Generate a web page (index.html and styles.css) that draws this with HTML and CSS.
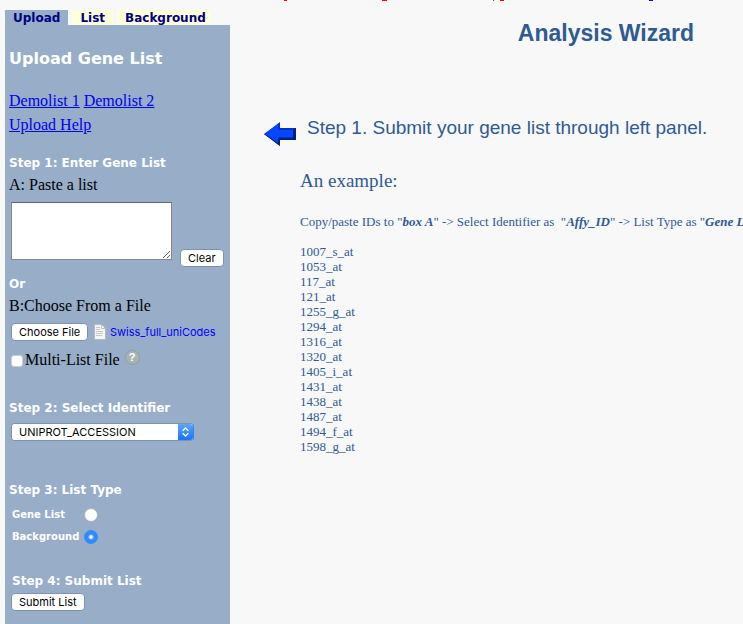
FILE: index.html
```html
<!DOCTYPE html>
<html lang="en">
<head>
<meta charset="utf-8">
<title>Analysis Wizard</title>
<link rel="stylesheet" href="styles.css">
</head>
<body>
<div class="page">
  <aside class="side">
    <nav class="tabs">
      <a class="tab active" href="#upload">Upload</a>
      <a class="tab" href="#list">List</a>
      <a class="tab" href="#background">Background</a>
    </nav>
    <form class="panel" id="upload">
      <h2 class="title">Upload Gene List</h2>
      <p class="links"><a href="#demo1">Demolist 1</a> <a href="#demo2">Demolist 2</a><br><a href="#help">Upload Help</a></p>

      <h3 class="step">Step 1: Enter Gene List</h3>
      <label class="text" for="paste">A: Paste a list</label>
      <div class="paste-row">
        <textarea class="paste" id="paste"></textarea>
        <button class="btn" type="button">Clear</button>
      </div>
      <h3 class="step">Or</h3>
      <label class="text" for="file">B:Choose From a File</label>
      <div class="file-row">
        <input class="file" id="file" type="file">
        <svg class="doc" viewBox="0 0 12 16" aria-hidden="true">
          <path d="M.5.5h7l4 4v11H.5z" fill="#f4f4f4" stroke="#b5b9bd"/>
          <path d="M7.500.5v4h4z" fill="#fff" stroke="#aaa" stroke-width=".7"/>
          <path d="M2 3.500h4M2 5.500h4M2 7.500h7M2 9.500h7M2 11.500h6" stroke="#bcbcbc" stroke-width=".8"/>
        </svg>
        <span class="filename">Swiss_full_uniCodes</span>
      </div>
      <div class="multi-row">
        <input class="check" id="multi" type="checkbox">
        <label class="multi" for="multi">Multi-List File</label>
        <a class="help" href="#multi-help">?</a>
      </div>

      <h3 class="step">Step 2: <label for="identifier">Select Identifier</label></h3>
      <div class="select-row">
        <select class="select" id="identifier"><option>UNIPROT_ACCESSION</option></select>
        <svg class="chevrons" viewBox="0 0 15 18" aria-hidden="true">
          <path d="M5 7.500 7.500 5 10 7.500M5 10.500 7.500 13 10 10.500" fill="none" stroke="#fff" stroke-width="1.300" stroke-linecap="round" stroke-linejoin="round"/>
        </svg>
      </div>

      <h3 class="step">Step 3: List Type</h3>
      <div class="types">
        <label for="gene">Gene List</label><input class="radio" id="gene" type="radio" name="type">
        <label for="bg">Background</label><input class="radio" id="bg" type="radio" name="type" checked>
      </div>

      <h3 class="step last">Step 4: Submit List</h3>
      <button class="btn" type="button">Submit List</button>
    </form>
  </aside>

  <main class="main">
    <svg class="notice" viewBox="0 0 400 2" aria-hidden="true">
      <path d="M14 0h3v1h-3zM112 0h5v1h-5zM223 0h1v1h-1zM230 0h4v1h-4z" fill="#f00"/>
      <path d="M379 0h4v1h-4z" fill="#00f"/>
    </svg>
    <h1 class="heading">Analysis Wizard</h1>
    <div class="lead">
      <svg class="arrow" viewBox="0 0 32 24" aria-hidden="true">
        <path d="M0 12 16 0v6h16v12H16v6z" fill="#0034c4"/>
        <path d="M0 12 16 24v-6h16V6l-3 2v8H14v4L3 12z" fill="#002080"/>
        <path d="M1 12 14 2v6h15v7H14v6z" fill="#0646ff"/>
      </svg>
      <h2 class="lead-text">Step 1. Submit your gene list through left panel.</h2>
    </div>
    <section class="example">
      <h3 class="example-title">An example:</h3>
      <p class="hint">Copy/paste IDs to "<b><i>box A</i></b>" -&gt; Select Identifier as&nbsp; "<b><i>Affy_ID</i></b>" -&gt; List Type as "<b><i>Gene List</i></b>"</p>
      <ul class="ids">
        <li>1007_s_at</li><li>1053_at</li><li>117_at</li><li>121_at</li><li>1255_g_at</li><li>1294_at</li><li>1316_at</li>
        <li>1320_at</li><li>1405_i_at</li><li>1431_at</li><li>1438_at</li><li>1487_at</li><li>1494_f_at</li><li>1598_g_at</li>
      </ul>
    </section>
  </main>
</div>
</body>
</html>
```
FILE: styles.css
```css
* { box-sizing: border-box; }
body { margin: 0; background: #f8f8f8; font: 16px/20px "Liberation Serif", serif; color: #000; overflow: hidden; }
h1, h2, h3, p, ul { margin: 0; padding: 0; }
.page { display: flex; min-height: 100vh; }

.side { flex: 0 0 225px; margin-left: 5px; padding-top: 10px; display: flex; flex-direction: column; }
.tabs { display: flex; gap: 4px; }
.tab { padding: 0 8px; height: 15px; background: #ffffdb; color: #000080; font: bold 12px/16px "DejaVu Sans", sans-serif; text-decoration: none; }
.tab:last-child { padding-right: 4px; }
.tab.active { background: #97adc8; }
.panel { flex: 1; padding: 24px 4px 12px; background: #97adc8; }
.title { color: #fff; font: bold 16px/20px "DejaVu Sans", sans-serif; }
.links { margin: 20px 0 18px; line-height: 24px; }
.links a { color: #0000ee; }
.step { margin-bottom: 4px; color: #fff; font: bold 12px/16px "DejaVu Sans", sans-serif; }
.text { display: block; }
.paste-row { display: flex; align-items: flex-end; gap: 8px; height: 72px; margin-bottom: 9px; padding-left: 2px; }
.paste { width: 161px; height: 58px; margin-bottom: 7px; border: 1px solid #888; border-top-color: #666; border-radius: 0; background: #fff; outline: 0; }
.btn, .file::file-selector-button { height: 18px; margin: 0; padding: 0 7px; border: 1px solid #7f92aa; border-radius: 4px; background: #fff; color: #000; font: 11px/16px Inter, sans-serif; white-space: nowrap; }
.file::file-selector-button { width: 77px; }
.file-row { display: flex; align-items: center; height: 18px; margin: 7px 0 9px; padding-left: 2px; }
.file { width: 77px; height: 18px; overflow: hidden; font-size: 11px; color: transparent; }
.doc { width: 12px; height: 16px; margin: 0 4px 0 6px; }
.filename { color: #0000ff; font: 11px/18px Inter, sans-serif; }
.multi-row { display: flex; align-items: center; height: 20px; margin-bottom: 30px; padding-left: 2px; }
.check { appearance: none; width: 12px; height: 12px; margin: 2px 2px 0 0; border: 1px solid #ccc; border-radius: 3px; background: #fff; }
.check:checked { background: #2e8bff; }
.help { width: 15px; height: 15px; margin: 0 0 5px 5px; border-radius: 50%; background: #a9b4b1; border: 1px solid #929f9f; color: #fff; font: bold 11px/13px "Liberation Sans", sans-serif; text-align: center; text-decoration: none; }
.select-row { display: flex; align-items: center; width: 183px; height: 18px; margin: 7px 0 41px 2px; border: 1px solid #7f92aa; border-right-color: #2f80f5; border-radius: 4px; background: #fff; overflow: hidden; }
.select { appearance: none; flex: 1; min-width: 0; height: 16px; padding: 0 7px; border: 0; background: #fff; color: #000; font: 11px/16px Inter, sans-serif; }
.chevrons { flex: none; width: 15px; height: 18px; background: linear-gradient(#62a9fb, #1070ff); }
.types { display: grid; grid-template-columns: 72px 14px; align-items: center; row-gap: 8px; margin: 10px 0 29px 3px; color: #fff; font: bold 10px/14px "DejaVu Sans", sans-serif; }
.radio { appearance: none; width: 14px; height: 14px; margin: 0; border: 1px solid #b0b0b0; border-radius: 50%; background: #fff; }
.radio:checked { border-color: #2e8bff; background: radial-gradient(circle, #fff 0 1px, #2e8bff 3px); }
.last { padding-left: 3px; }
.last + .btn { display: block; margin-left: 2px; }

.main { flex: 1; min-width: 0; overflow: hidden; padding-left: 34px; color: #2f5b93; }
.notice { display: block; width: 400px; height: 2px; margin-left: 6px; }
.heading { padding: 17px 49px 0 0; text-align: right; font: bold 23px/28px "Liberation Sans", sans-serif; white-space: nowrap; }
.lead { display: flex; align-items: flex-start; gap: 11px; margin: 68px 0 23px; }
.arrow { flex: none; width: 32px; height: 24px; margin-top: 7px; }
.lead-text { font: 19px/26px "Liberation Sans", sans-serif; white-space: nowrap; }
.example { padding-left: 36px; }
.example-title { margin: 0 0 21px; font: 19px/24px "Liberation Serif", serif; }
.hint { margin-bottom: 15px; font-size: 13px; line-height: 15px; white-space: nowrap; }
.ids { list-style: none; font-size: 13px; line-height: 15px; }
```
